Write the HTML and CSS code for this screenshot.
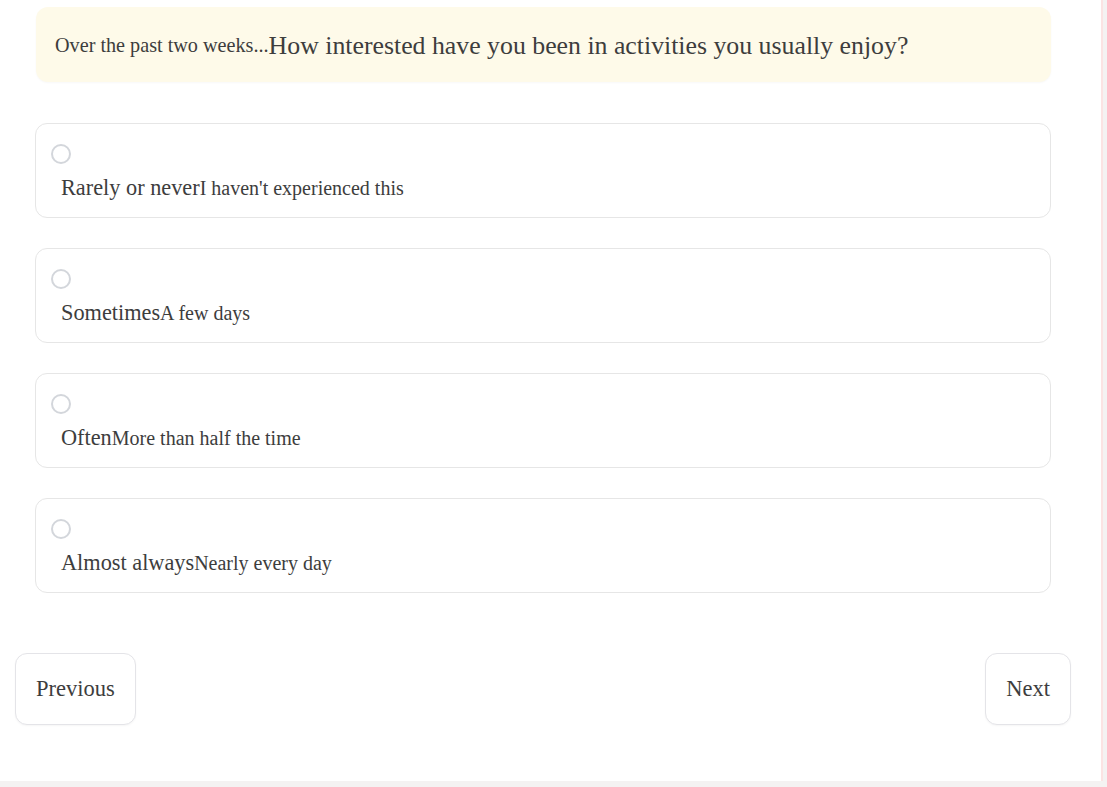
FILE: index.html
```html
<!DOCTYPE html>
<html lang="en">
<head>
<meta charset="utf-8">
<title>Question</title>
<link rel="stylesheet" href="styles.css">
</head>
<body>
<main class="page">
  <section class="question">
    <span class="lead">Over the past two weeks...</span><span class="prompt">How interested have you been in activities you usually enjoy?</span>
  </section>
  <div class="options">
    <label class="option">
      <span class="radio"></span>
      <span class="text"><span class="title">Rarely or never</span><span class="desc">I haven't experienced this</span></span>
    </label>
    <label class="option">
      <span class="radio"></span>
      <span class="text"><span class="title">Sometimes</span><span class="desc">A few days</span></span>
    </label>
    <label class="option">
      <span class="radio"></span>
      <span class="text"><span class="title">Often</span><span class="desc">More than half the time</span></span>
    </label>
    <label class="option">
      <span class="radio"></span>
      <span class="text"><span class="title">Almost always</span><span class="desc">Nearly every day</span></span>
    </label>
  </div>
  <nav class="nav">
    <button class="btn">Previous</button>
    <button class="btn">Next</button>
  </nav>
</main>
</body>
</html>
```

FILE: styles.css
```css
* { box-sizing: border-box; }
html, body { margin: 0; padding: 0; }
body {
  background: #f4f2f2;
  font-family: "Liberation Serif", "DejaVu Serif", serif;
  color: #3d3d3d;
  width: 1107px;
  height: 787px;
  overflow: hidden;
}
.page {
  width: 1103px;
  height: 781px;
  background: #fff;
  border-right: 2px solid #fbe3e3;
  padding: 7px 0 0 0;
}
.question {
  margin: 0 50px 0 36px;
  background: #fefae9;
  border-radius: 12px;
  height: 75px;
  padding: 0 19px;
  display: flex;
  align-items: center;
  padding-top: 2px;
  box-shadow: 0 1px 2px rgba(0,0,0,0.03);
}
.lead { font-size: 20.2px; }
.prompt { font-size: 25.8px; }
.options {
  margin: 41px 50px 0 35px;
  display: flex;
  flex-direction: column;
  gap: 30px;
}
.option {
  display: block;
  height: 95px;
  border: 1px solid #e6e6e6;
  border-radius: 12px;
  padding: 20px 24px 0 25px;
  background: #fff;
}
.radio {
  display: block;
  width: 20px;
  height: 20px;
  border: 2px solid #d3d6db;
  border-radius: 50%;
  margin-left: -10px;
}
.text {
  display: block;
  margin-top: 9px;
  line-height: 30px;
}
.title { font-size: 22.3px; }
.desc { font-size: 20px; }
.nav {
  margin: 60px 30px 0 15px;
  display: flex;
  justify-content: space-between;
}
.btn {
  font-family: inherit;
  color: #3d3d3d;
  font-size: 22.5px;
  background: #fff;
  border: 1px solid #e4e4e8;
  border-radius: 12px;
  height: 72px;
  padding: 0 20px;
  box-shadow: 0 1px 2px rgba(0,0,0,0.04);
}
```
